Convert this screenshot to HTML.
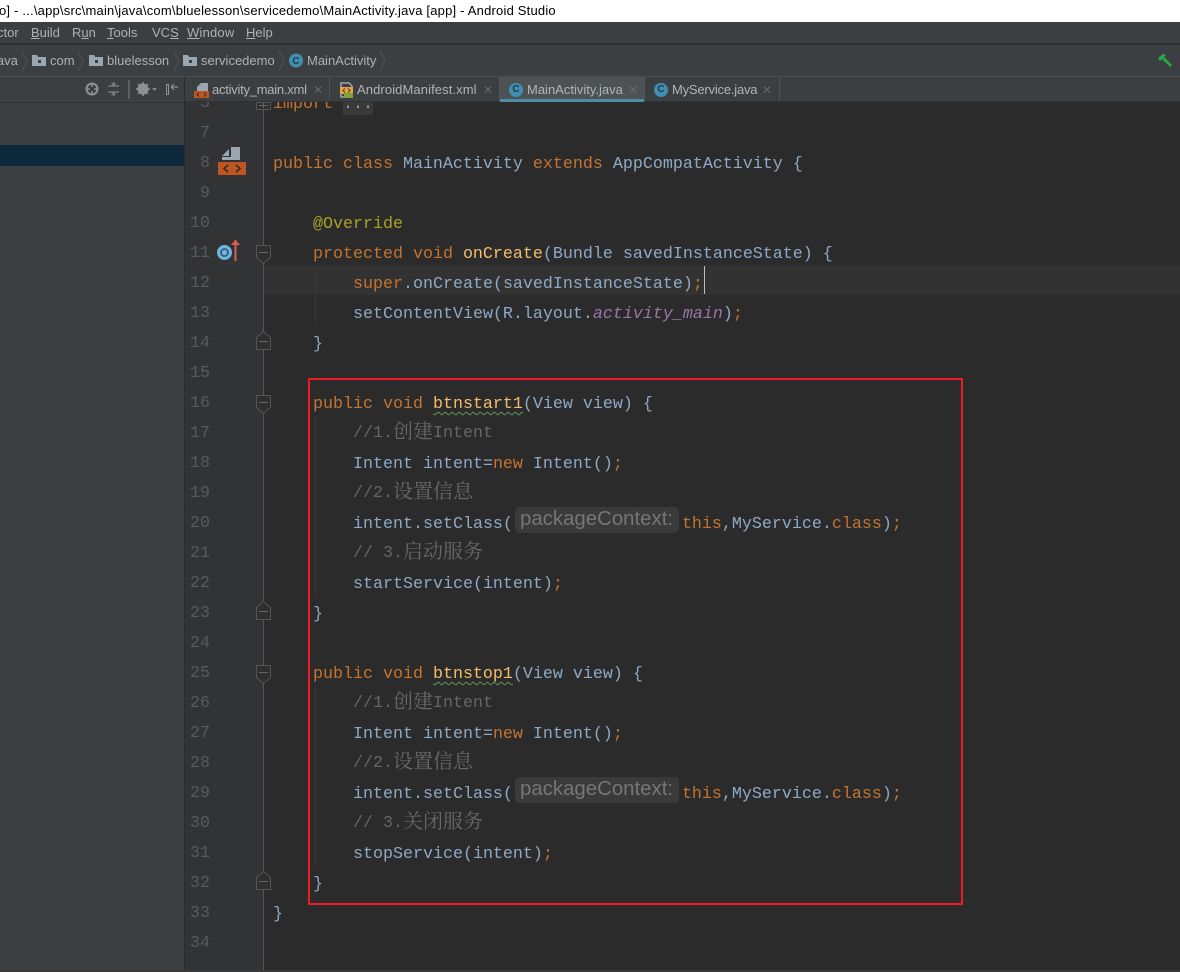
<!DOCTYPE html>
<html><head><meta charset="utf-8">
<style>
html,body{margin:0;padding:0;background:#2b2b2b}
#r{position:relative;width:1180px;height:972px;overflow:hidden;background:#2b2b2b;font-family:"Liberation Sans","Noto Sans CJK SC",sans-serif}
.a{position:absolute}
.ui{position:absolute;font-size:13px;color:#aeb2b5;line-height:16px;white-space:pre}
.ui u{text-decoration:underline}
.c{position:absolute;left:273px;margin-top:3px;height:30px;line-height:30px;font-family:"Liberation Mono",monospace;font-size:16.67px;color:#8ea9c6;white-space:pre}
.n{position:absolute;left:185px;margin-top:2px;width:25px;text-align:right;height:30px;line-height:30px;font-family:"Liberation Mono",monospace;font-size:16.67px;color:#585b5e}
.k{color:#c5742f}.m{color:#f5bd68}.s{color:#c5742f}
.c.g{color:#666;margin-top:2px}
.g i{font-style:normal;font-family:"Noto Serif CJK SC","Noto Sans CJK SC",serif;font-size:20px;display:inline-block;width:20px;text-align:center;line-height:20px;color:#686868;position:relative;top:1px}
.w{text-decoration:underline wavy #629755 1px;text-underline-offset:3px}
.sp{display:inline-block;width:169px;height:1px}
.h{position:absolute;left:515px;width:159px;height:26px;line-height:25px;padding-left:5px;background:#3a3a3a;border-radius:4px;color:#767676;font-family:"Liberation Sans",sans-serif;font-size:20.4px;white-space:pre}
.z{position:absolute;z-index:3}
.tab{position:absolute;z-index:3;top:77px;height:24px;background:#3c3f41;border-right:1px solid #505254}
.tt{position:absolute;z-index:4;font-size:13px;top:82px;line-height:16px;color:#b0b5b9;white-space:pre}
.x{position:absolute;z-index:4;top:84px;color:#66696b;font-size:12px;line-height:12px}
.cc{position:absolute;z-index:4;width:14px;height:14px;border-radius:50%;background:#3f8fb0;color:#26384a;font-size:10px;line-height:14px;text-align:center;font-weight:bold}
</style></head>
<body><div id="r">
<!-- title -->
<div class="a" style="left:0;top:0;width:1180px;height:22px;background:#fff"></div>
<div class="a" style="left:-1px;top:3px;font-size:13px;letter-spacing:.2px;line-height:16px;color:#000;white-space:pre">o] - ...\app\src\main\java\com\bluelesson\servicedemo\MainActivity.java [app] - Android Studio</div>
<!-- menu -->
<div class="a" style="left:0;top:22px;width:1180px;height:21px;background:#3c3f41"></div>
<div class="a" style="left:0;top:43px;width:1180px;height:2px;background:#2f2f2f"></div>
<div class="ui" style="left:-3px;top:25px">ctor</div>
<div class="ui" style="left:31px;top:25px"><u>B</u>uild</div>
<div class="ui" style="left:72px;top:25px">R<u>u</u>n</div>
<div class="ui" style="left:107px;top:25px"><u>T</u>ools</div>
<div class="ui" style="left:152px;top:25px">VC<u>S</u></div>
<div class="ui" style="left:187px;top:25px;letter-spacing:.2px"><u>W</u>indow</div>
<div class="ui" style="left:246px;top:25px"><u>H</u>elp</div>
<!-- breadcrumb -->
<div class="a" style="left:0;top:45px;width:1180px;height:31px;background:#3c3f41"></div>
<div class="a" style="left:0;top:76px;width:1180px;height:1px;background:#4b4b4b"></div>
<div class="ui" style="left:-6px;top:53px">java</div>
<div class="ui" style="left:50px;top:53px">com</div>
<div class="ui" style="left:107px;top:53px">bluelesson</div>
<div class="ui" style="left:201px;top:53px">servicedemo</div>
<div class="ui" style="left:307px;top:53px">MainActivity</div>
<svg class="a" style="left:0;top:45px" width="400" height="31" fill="none">
<g stroke="#505355" stroke-width="1"><path d="M22 6l5 10-5 10M78 6l5 10-5 10M174 6l5 10-5 10M279 6l5 10-5 10M380 6l5 10-5 10"/></g>
<g fill="#9aa7b0"><path d="M32 10h5l1 2h8v9H32z"/><path d="M89 10h5l1 2h8v9H89z"/><path d="M183 10h5l1 2h8v9h-14z"/></g>
<g fill="#3c3f41"><rect x="38" y="15" width="3" height="3"/><rect x="95" y="15" width="3" height="3"/><rect x="189" y="15" width="3" height="3"/></g>
<circle cx="296" cy="15.500" r="7" fill="#3f8fb0"/><text x="296" y="19" font-size="10" font-weight="bold" font-family="Liberation Sans" fill="#26384a" text-anchor="middle">C</text>
</svg>
<svg class="a" style="left:1155px;top:50px" width="20" height="20"><path d="M3 8l5-4 3 1-2 2 8 8-2 2-8-8-2 2z" fill="#27a745"/></svg>
<!-- sidebar -->
<div class="a" style="left:0;top:77px;width:184px;height:895px;background:#3c3f41"></div>
<div class="a" style="left:0;top:102px;width:184px;height:1px;background:#323232"></div>
<div class="a" style="left:0;top:145px;width:184px;height:21px;background:#0d293e"></div>
<div class="a" style="left:184px;top:77px;width:1px;height:895px;background:#2b2b2b"></div>
<svg class="a" style="left:80px;top:77px" width="104" height="25" fill="none">
<circle cx="12" cy="12" r="5.500" stroke="#8f9294" stroke-width="2"/><path d="M12 6v4M12 14v4M6 12h4M14 12h4" stroke="#8f9294" stroke-width="1.500"/>
<path d="M28 9h11M28 15h11M33.500 5v3M33.500 16v3" stroke="#84878a" stroke-width="1.200"/><path d="M31.500 6l2 2.500 2-2.500M31.500 18l2-2.500 2 2.500" stroke="#84878a"/>
<rect x="48" y="3" width="2" height="19" fill="#5c5f61"/>
<circle cx="63" cy="12" r="4" stroke="#8f9294" stroke-width="3"/><path d="M63 5v14M56 12h14M58 7l10 10M68 7L58 17" stroke="#8f9294" stroke-width="1.500"/><path d="M72 11h5l-2.500 3z" fill="#84878a"/>
<rect x="86.500" y="7.500" width="2" height="10" stroke="#8f9294"/><path d="M91 10h7M91 10l3-3M91 10l3 3" stroke="#8f9294" stroke-width="1.200"/>
</svg>
<!-- tabs bar -->
<div class="z" style="left:185px;top:77px;width:995px;height:25px;background:#3c3f41"></div>
<div class="z" style="left:185px;top:101px;width:995px;height:1px;background:#323232"></div>
<div class="tab" style="left:185px;width:144px"></div>
<div class="tab" style="left:330px;width:169px"></div>
<div class="tab" style="left:500px;width:144px;background:#4e5254"></div>
<div class="z" style="left:500px;top:99px;width:144px;height:3px;background:#4a8fa8;z-index:4"></div>
<div class="tab" style="left:645px;width:134px"></div>
<svg class="a" style="left:190px;top:81px;z-index:4" width="20" height="18"><path d="M11 2h7v8H7V6z" fill="#9aa7b0"/><path d="M7 10l3-3v3z" fill="#9aa7b0"/><rect x="4" y="10" width="15" height="7" fill="#bf5522"/><path d="M9 11.500l-2 2 2 2M14 11.500l2 2-2 2" stroke="#2b2b2b" fill="none"/></svg>
<div class="tt" style="left:212px;letter-spacing:-.25px">activity_main.xml</div>
<div class="x" style="left:313px">✕</div>
<svg class="a" style="left:338px;top:80px;z-index:4" width="18" height="20"><path d="M3 3h8l3 3v11H3z" fill="none" stroke="#9aa7b0" stroke-width="1.500"/><rect x="2" y="7" width="13" height="7" fill="#e8a33d"/><path d="M7 8.500l-2 2 2 2M10 8.500l2 2-2 2" stroke="#3c3f41" fill="none"/><rect x="6" y="13" width="9" height="5" fill="#7da33a"/></svg>
<div class="tt" style="left:357px;letter-spacing:.1px">AndroidManifest.xml</div>
<div class="x" style="left:483px">✕</div>
<div class="cc" style="left:509px;top:83px">C</div>
<div class="tt" style="left:527px">MainActivity.java</div>
<div class="x" style="left:628px">✕</div>
<div class="cc" style="left:654px;top:83px">C</div>
<div class="tt" style="left:672px;letter-spacing:-.2px">MyService.java</div>
<div class="x" style="left:762px">✕</div>
<!-- gutter -->
<div class="a" style="left:185px;top:102px;width:79px;height:870px;background:#313335"></div>
<div class="a" style="left:263px;top:102px;width:1px;height:868px;background:#555"></div>
<div class="a" style="left:264px;top:265px;width:916px;height:30px;background:#323232"></div>
<div class="a" style="left:0;top:970px;width:1180px;height:2px;background:#3a3a3a"></div>
<div class="a" style="left:704px;top:266px;width:1px;height:28px;background:#bbb"></div>
<!-- indent guides -->
<div class="a" style="left:315px;top:266px;width:1px;height:60px;background:#383838"></div>
<div class="a" style="left:315px;top:416px;width:1px;height:180px;background:#383838"></div>
<div class="a" style="left:315px;top:686px;width:1px;height:180px;background:#383838"></div>
<!-- numbers -->
<div class="n" style="top:87px">3</div>
<div class="n" style="top:117px">7</div>
<div class="n" style="top:147px">8</div>
<div class="n" style="top:177px">9</div>
<div class="n" style="top:207px">10</div>
<div class="n" style="top:237px">11</div>
<div class="n" style="top:267px">12</div>
<div class="n" style="top:297px">13</div>
<div class="n" style="top:327px">14</div>
<div class="n" style="top:357px">15</div>
<div class="n" style="top:387px">16</div>
<div class="n" style="top:417px">17</div>
<div class="n" style="top:447px">18</div>
<div class="n" style="top:477px">19</div>
<div class="n" style="top:507px">20</div>
<div class="n" style="top:537px">21</div>
<div class="n" style="top:567px">22</div>
<div class="n" style="top:597px">23</div>
<div class="n" style="top:627px">24</div>
<div class="n" style="top:657px">25</div>
<div class="n" style="top:687px">26</div>
<div class="n" style="top:717px">27</div>
<div class="n" style="top:747px">28</div>
<div class="n" style="top:777px">29</div>
<div class="n" style="top:807px">30</div>
<div class="n" style="top:837px">31</div>
<div class="n" style="top:867px">32</div>
<div class="n" style="top:897px">33</div>
<div class="n" style="top:927px">34</div>
<!-- code -->
<div class="a" style="left:343px;top:96px;width:30px;height:19px;background:#3a3a3a"></div>
<div class="c k" style="top:87px">import <span style="color:#9a9a9a">...</span></div>
<div class="c" style="top:147px"><span class="k">public class</span> MainActivity <span class="k">extends</span> AppCompatActivity {</div>
<div class="c" style="top:207px;left:313px;color:#a8a228">@Override</div>
<div class="c" style="top:237px;left:313px"><span class="k">protected void</span> <span class="m">onCreate</span>(Bundle savedInstanceState) {</div>
<div class="c" style="top:267px;left:353px"><span class="k">super</span>.onCreate(savedInstanceState)<span class="s">;</span></div>
<div class="c" style="top:297px;left:353px">setContentView(R.layout.<span style="color:#9876aa;font-style:italic">activity_main</span><span>)</span><span class="s">;</span></div>
<div class="c" style="top:327px;left:313px">}</div>
<div class="c" style="top:387px;left:313px"><span class="k">public void</span> <span class="m w">btnstart1</span>(View view) {</div>
<div class="c g" style="top:417px;left:353px">//1.<i>创</i><i>建</i>Intent</div>
<div class="c" style="top:447px;left:353px">Intent intent=<span class="k">new</span> Intent()<span class="s">;</span></div>
<div class="c g" style="top:477px;left:353px">//2.<i>设</i><i>置</i><i>信</i><i>息</i></div>
<div class="h" style="top:507px">packageContext:</div>
<div class="c" style="top:507px;left:353px">intent.setClass(<span class="sp"></span><span class="k">this</span>,MyService.<span class="k">class</span>)<span class="s">;</span></div>
<div class="c g" style="top:537px;left:353px">// 3.<i>启</i><i>动</i><i>服</i><i>务</i></div>
<div class="c" style="top:567px;left:353px">startService(intent)<span class="s">;</span></div>
<div class="c" style="top:597px;left:313px">}</div>
<div class="c" style="top:657px;left:313px"><span class="k">public void</span> <span class="m w">btnstop1</span>(View view) {</div>
<div class="c g" style="top:687px;left:353px">//1.<i>创</i><i>建</i>Intent</div>
<div class="c" style="top:717px;left:353px">Intent intent=<span class="k">new</span> Intent()<span class="s">;</span></div>
<div class="c g" style="top:747px;left:353px">//2.<i>设</i><i>置</i><i>信</i><i>息</i></div>
<div class="h" style="top:777px">packageContext:</div>
<div class="c" style="top:777px;left:353px">intent.setClass(<span class="sp"></span><span class="k">this</span>,MyService.<span class="k">class</span>)<span class="s">;</span></div>
<div class="c g" style="top:807px;left:353px">// 3.<i>关</i><i>闭</i><i>服</i><i>务</i></div>
<div class="c" style="top:837px;left:353px">stopService(intent)<span class="s">;</span></div>
<div class="c" style="top:867px;left:313px">}</div>
<div class="c" style="top:897px">}</div>
<!-- gutter icons and folds -->
<svg class="a" style="left:185px;top:96px" width="100" height="810" fill="none">
<g fill="#2f2f2f" stroke="#555">
<path d="M71.500 6.500h14v7h-14z"/>
<path d="M71.500 149.500h14v12l-7 6-7-6z"/>
<path d="M71.500 253.500h14v-12l-7-6-7 6z"/>
<path d="M71.500 299.500h14v12l-7 6-7-6z"/>
<path d="M71.500 523.500h14v-12l-7-6-7 6z"/>
<path d="M71.500 569.500h14v12l-7 6-7-6z"/>
<path d="M71.500 793.500h14v-12l-7-6-7 6z"/>
</g>
<path d="M74 9.500h9M78.500 7v5M74 156.500h9M74 245.500h9M74 306.500h9M74 515.500h9M74 576.500h9M74 785.500h9" stroke="#666"/>
<path d="M46 51h9v13H37v-3h9z" fill="#9aa7b0"/><path d="M37 60l7-7v7z" fill="#9aa7b0"/>
<rect x="33" y="66" width="28" height="13" fill="#bf5522"/>
<path d="M43 69l-4 3.500 4 3.500M51 69l4 3.500-4 3.500" stroke="#2b2b2b" stroke-width="1.500"/>
<circle cx="39.500" cy="156.500" r="7.500" fill="#6fb5e0"/><circle cx="39.500" cy="156.500" r="3.500" fill="none" stroke="#3c5a78" stroke-width="1.800"/>
<path d="M50.500 165v-21" stroke="#d8604f" stroke-width="2"/><path d="M46 149l4.500-5 4.500 5z" fill="#d8604f"/>
</svg>
<!-- red box -->
<div class="a" style="left:308px;top:378px;width:651px;height:523px;border:2px solid #ed1c24"></div>
</div></body></html>
